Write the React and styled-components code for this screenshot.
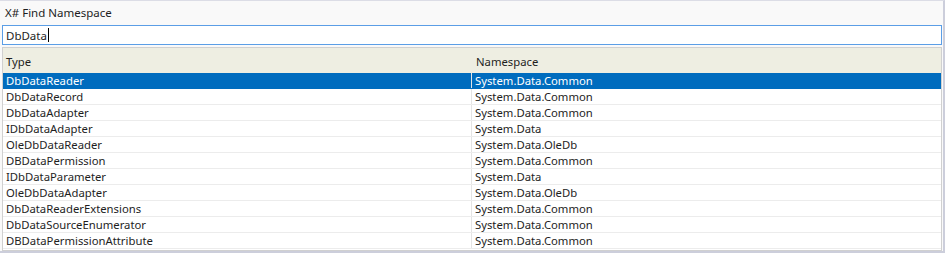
import React from "react";
import styled, { createGlobalStyle } from "styled-components";

const Global = createGlobalStyle`
  html, body { margin: 0; padding: 0; background: #ffffff; }
  body { font-family: "Noto Sans", "Open Sans", sans-serif; }
`;

const Frame = styled.div`
  box-sizing: border-box;
  width: 945px;
  height: 253px;
  background: #f9f9f9;
  border-top: 1px solid #dcdde6;
  border-right: 2px solid #cccedb;
  border-bottom: 2px solid #cccedb;
  padding: 0 1px 0 2px;
  display: flex;
  flex-direction: column;
  font-size: 11.3px;
  color: #1e1e1e;
`;

const Title = styled.div`
  height: 24px;
  line-height: 24px;
  padding-left: 3px;
  font-size: 11.5px;
`;

const Input = styled.div`
  box-sizing: border-box;
  height: 20px;
  border: 1px solid #5b9ee6;
  background: #ffffff;
  padding-left: 3px;
  display: flex;
  align-items: center;
  font-size: 11.5px;
`;

const Caret = styled.span`
  display: inline-block;
  width: 1px;
  height: 14px;
  background: #000;
  margin-left: 1px;
`;

const Grid = styled.div`
  margin-top: 2px;
  flex: 1;
  box-sizing: border-box;
  border: 1px solid #d0d0d0;
  background: #ffffff;
  display: flex;
  flex-direction: column;
  overflow: hidden;
`;

const Header = styled.div`
  height: 25px;
  background: #eeeee2;
  display: grid;
  grid-template-columns: 469px 1fr;
  align-items: center;
  padding-top: 2px;
  box-sizing: border-box;
`;

const HeadCell = styled.div`
  padding-left: ${(p) => (p.$first ? "3px" : "4px")};
  font-size: 11.3px;
`;

const Row = styled.div`
  height: 16px;
  box-sizing: border-box;
  display: grid;
  grid-template-columns: 469px 1fr;
  background: ${(p) => (p.$selected ? "#006cbe" : "#ffffff")};
  color: ${(p) => (p.$selected ? "#ffffff" : "#1e1e1e")};
  border-bottom: 1px solid ${(p) => (p.$selected ? "#006cbe" : "#ececec")};
`;

const Cell = styled.div`
  line-height: 16px;
  font-size: 11.3px;
  padding-left: 3px;
  border-right: ${(p) => (p.$first ? "1px solid #e4e4e4" : "none")};
  white-space: nowrap;
  overflow: hidden;
`;

const rows = [
  ["DbDataReader", "System.Data.Common"],
  ["DbDataRecord", "System.Data.Common"],
  ["DbDataAdapter", "System.Data.Common"],
  ["IDbDataAdapter", "System.Data"],
  ["OleDbDataReader", "System.Data.OleDb"],
  ["DBDataPermission", "System.Data.Common"],
  ["IDbDataParameter", "System.Data"],
  ["OleDbDataAdapter", "System.Data.OleDb"],
  ["DbDataReaderExtensions", "System.Data.Common"],
  ["DbDataSourceEnumerator", "System.Data.Common"],
  ["DBDataPermissionAttribute", "System.Data.Common"],
];

export default function App() {
  return (
    <>
      <Global />
      <Frame>
        <Title>X# Find Namespace</Title>
        <Input>
          DbData
          <Caret />
        </Input>
        <Grid>
          <Header>
            <HeadCell $first>Type</HeadCell>
            <HeadCell>Namespace</HeadCell>
          </Header>
          {rows.map(([t, n], i) => (
            <Row key={t} $selected={i === 0}>
              <Cell $first>{t}</Cell>
              <Cell>{n}</Cell>
            </Row>
          ))}
        </Grid>
      </Frame>
    </>
  );
}
